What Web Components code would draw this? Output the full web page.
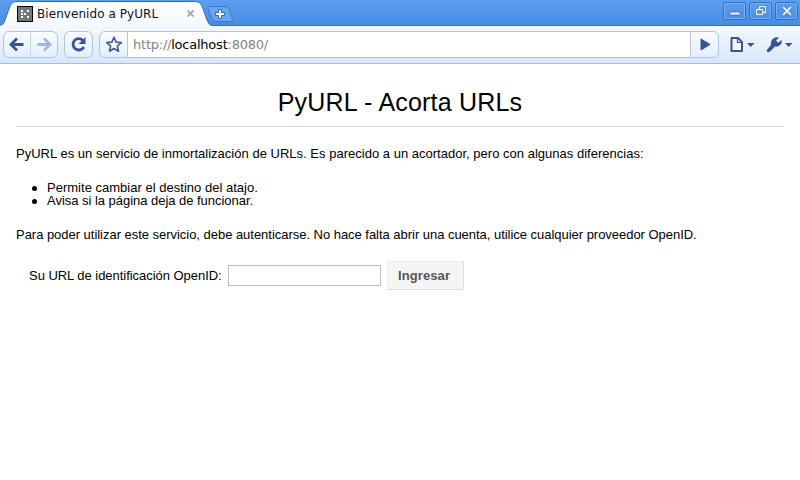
<!DOCTYPE html>
<html lang="es"><head><meta charset="utf-8"><title>Bienvenido a PyURL</title>
<style>html,body{margin:0;height:100%;overflow:hidden;background:#fff}</style></head>
<body>
<browser-window>
  <tab-strip slot="chrome"><browser-tab>Bienvenido a PyURL</browser-tab></tab-strip>
  <tool-bar slot="chrome"></tool-bar>
  <pyurl-page></pyurl-page>
</browser-window>
<script>
const define = (name, html) => customElements.define(name, class extends HTMLElement {
  constructor() { super(); this.attachShadow({mode: 'open'}).innerHTML = html; }
});
define('browser-window', `<style>:host{display:flex;flex-direction:column;width:800px;height:480px;background:#fff}</style>
<slot name="chrome"></slot><slot></slot>`);
define('browser-tab', `<style>
:host{display:block;position:relative;width:212px;height:26px;font:12px/26px "DejaVu Sans",sans-serif;color:#111}
.shape{position:absolute;left:0;top:0}
.row{position:relative;display:flex;align-items:center;height:26px;padding:1px 0 0 17px;box-sizing:border-box}
.label{width:146px;margin-left:4px;letter-spacing:.06px;white-space:nowrap}
</style>
<svg class="shape" width="212" height="26"><defs><linearGradient id="g" x2="0" y2="1"><stop stop-color="#fff"/><stop offset="1" stop-color="#f5f9fe"/></linearGradient></defs>
<path d="M0 26V25.5C3 25 4 23 5 20L10 6Q12 1.5 16 1.5H196Q200 1.5 202 6L207 20Q209 25.5 212 25.5V26Z" fill="url(#g)"/>
<path d="M0 25C3 25 4 23 5 20L10 6Q12 1.5 16 1.5H196Q200 1.5 202 6L207 20Q209 25.5 212 25.5" fill="none" stroke="#3a6cb0"/></svg>
<div class="row"><svg width="16" height="16" shape-rendering="crispEdges"><rect x=".5" y=".5" width="15" height="15" fill="#777" stroke="#000"/>
<path fill="#fff" d="M4 4h2v2H4zM10 4h2v2h-2zM4 7h2v2H4zM7 7h2v2H7zM4 10h2v2H4zM10 10h2v2h-2z"/></svg>
<span class="label"><slot></slot></span>
<svg width="9" height="9" style="margin-left:3px"><path d="M1.500 1.500L7.500 7.500M7.500 1.500L1.500 7.500" stroke="#aaa" stroke-width="1.8"/></svg></div>`);
define('window-button', `<style>:host{display:grid;place-items:center;box-sizing:border-box;width:23px;height:18px;border:1px solid #3472bf;border-radius:2px;box-shadow:inset 0 0 0 1px #75adf1}</style><slot></slot>`);
define('tab-strip', `<style>
:host{display:flex;box-sizing:border-box;height:26px;flex:none;background:linear-gradient(#5c9ff0,#4a8fe6 80%,#468ae0);box-shadow:inset 0 -1px #3a70b8}
.controls{display:flex;gap:3px;margin-left:auto;padding:2px 2px 0 0}
.new{margin:6px 0 0 -5px}
svg{display:block}
</style><slot></slot>
<svg class="new" width="27" height="17"><path d="M3 .5H19Q21 .5 22 3L25.500 13Q26 15.500 24 15.500H9Q6 15.500 5 13L1 3Q.5 .5 3 .5Z" fill="#68a4ef" stroke="#3b77c4"/>
<path d="M11.500 3.500h3v3h3v3h-3v3h-3v-3h-3v-3h3z" fill="#edf6ff" stroke="#376ab0"/></svg>
<div class="controls">
<window-button><svg width="14" height="12"><rect x="2" y="7" width="10" height="3" rx=".5" fill="#eef6ff" stroke="#386daf" stroke-width=".8"/></svg></window-button>
<window-button><svg width="14" height="12" fill="none"><path d="M5.500 3V1.500H11.500V7H9.500M2.500 4.500H8.500V9.500H2.500Z" stroke="#3467a8" stroke-width="2.4"/><path d="M5.500 4V1.500H11.500V7.500H9M2.500 4.500H8.500V9.500H2.500Z" stroke="#e5f1ff" stroke-width="1.4"/></svg></window-button>
<window-button><svg width="14" height="12"><path d="M3 2L11 10M11 2L3 10" stroke="#3467a8" stroke-width="3"/><path d="M3 2L11 10M11 2L3 10" stroke="#eef6ff" stroke-width="1.8"/></svg></window-button>
</div>`);
define('tool-bar', `<style>
:host{display:flex;align-items:flex-start;box-sizing:border-box;height:38px;flex:none;padding:5px 0 0 3px;border-bottom:1px solid #a9bddc;background:linear-gradient(#f5f9fe,#d8e6f8);font:13px/25px "DejaVu Sans",sans-serif}
.box{display:flex;box-sizing:border-box;height:27px;border:1px solid #b5c3df;border-radius:6px;background:linear-gradient(#f9fbff,#e4eefb);overflow:hidden}
.nav{width:55px}.reload{width:29px;margin-left:6px}.omni{width:620px;margin-left:6px}
svg{display:block;flex:none}
.div{border-left:1px solid #c9d5ea;box-sizing:border-box}
.url{flex:1;background:#fff;border:solid #b5c3df;border-width:0 1px;padding-left:5px;color:#848484;white-space:pre;letter-spacing:-.23px}
b{font-weight:400;color:#000}
</style>
<div class="box nav"><svg width="26" height="25"><path d="M13 6.500L7 12.500L13 18.500M7.500 12.500H19.500" fill="none" stroke="#365591" stroke-width="2.8"/></svg>
<svg class="div" width="27" height="25"><path d="M13 6.500L19 12.500L13 18.500M18.500 12.500H6.500" fill="none" stroke="#a5b9dc" stroke-width="2.8"/></svg></div>
<div class="box reload"><svg width="27" height="25"><path d="M18.200 8.700A5.700 5.700 0 1 0 18.800 15" fill="none" stroke="#365591" stroke-width="2.8"/><path d="M20.500 5V12H13.500Z" fill="#365591"/></svg></div>
<div class="box omni"><svg width="27" height="25"><path d="M14 5.200L16.100 10.100L21.300 10.600L17.300 14.100L18.500 19.200L14 16.500L9.500 19.200L10.700 14.100L6.700 10.600L11.900 10.100Z" fill="#f7faff" stroke="#3c5a94" stroke-width="1.6" stroke-linejoin="round"/></svg>
<div class="url">http://<b>localhost</b>:8080/</div>
<svg width="27" height="25"><path d="M10 7L19 12.500L10 18Z" fill="#365591" stroke="#365591" stroke-linejoin="round"/></svg></div>
<svg width="78" height="27" style="margin-left:3px"><path d="M9.500 7H16L20 11V20H9.500Z" fill="#f5f9ff" stroke="#365591" stroke-width="2" stroke-linejoin="round"/><path d="M15.500 7V11.500H20" fill="none" stroke="#365591" stroke-width="1.2"/><path d="M25 12H32.500L28.700 16ZM63 12H70.500L66.700 16Z" fill="#365591"/>
<path d="M45.200 18.500L49 14Q48.300 9.800 51.300 7.400Q54 5.600 57 6.500L54 9.500L56.200 11.800L59.500 9Q60.500 12 58 14.300Q55.700 16.200 53 15.500L48 20.500Q46.500 21.800 45.200 20.800Q44 19.800 45.200 18.500Z" fill="#365591"/></svg>`);
define('openid-form', `<style>
:host{display:flex;align-items:center;height:29px;margin:0 0 0 13px}
label{width:192px;white-space:nowrap;letter-spacing:-.04px}
input{box-sizing:border-box;width:153px;height:21px;margin:0 0 0 7px;border:1px solid #bbb;background:#fff;padding:2px}
button{box-sizing:border-box;width:77px;height:29px;margin-left:6px;padding:0 3px 0 0;border:1px solid #eee;border-right-color:#dedede;border-bottom-color:#dedede;background:#f5f5f5;color:#565656;font:bold 13px/13px "Liberation Sans",sans-serif;letter-spacing:.1px}
</style><label for="i">Su URL de identificación OpenID:</label><input id="i"><button>Ingresar</button>`);
define('pyurl-page', `<style>
:host{display:block;flex:1;padding:0 16px;color:#000;font:13px/13px "Liberation Sans",Arial,sans-serif}
h1{margin:0 0 20px;padding:23px 0 9px;border-bottom:1px solid #ddd;font:25px/30px "Liberation Sans",sans-serif;letter-spacing:.2px;text-align:center}
p{margin:0;white-space:nowrap}ul{margin:21px 0;padding-left:31px;list-style:none}
li{display:flex;align-items:center}
li::before{content:"";width:5px;height:5px;border-radius:50%;background:#000;margin:1px 10px 0 -15px}
.a{letter-spacing:.015px}.b{letter-spacing:-.03px}
openid-form{margin-top:20px}
</style><h1>PyURL - Acorta URLs</h1>
<p class="a">PyURL es un servicio de inmortalización de URLs. Es parecido a un acortador, pero con algunas diferencias:</p>
<ul><li><span class="a">Permite cambiar el destino del atajo.</span></li><li><span class="b">Avisa si la página deja de funcionar.</span></li></ul>
<p class="b">Para poder utilizar este servicio, debe autenticarse. No hace falta abrir una cuenta, utilice cualquier proveedor OpenID.</p>
<openid-form></openid-form>`);
</script></body></html>
